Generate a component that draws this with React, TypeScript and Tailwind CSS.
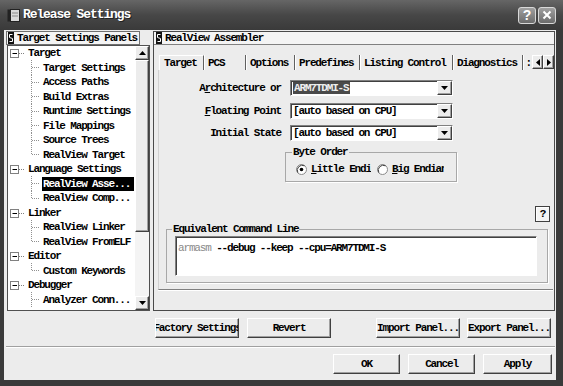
import React from 'react';

const raised =
  'border border-t-white border-l-white border-r-[#404040] border-b-[#404040] bg-[#ececec] shadow-[inset_-1px_-1px_0_#a0a0a0]';
const sunken =
  'border border-t-[#808080] border-l-[#808080] border-r-white border-b-white shadow-[inset_1px_1px_0_#404040]';

function Tri({ dir }: { dir: 'up' | 'down' | 'left' | 'right' }) {
  const pts = {
    down: '0,0 7,0 3.5,4',
    up: '0,4 7,4 3.5,0',
    left: '4,0 4,7 0,3.5',
    right: '0,0 0,7 4,3.5',
  }[dir];
  const vertical = dir === 'up' || dir === 'down';
  return (
    <svg width={vertical ? 7 : 4} height={vertical ? 4 : 7} viewBox={vertical ? '0 0 7 4' : '0 0 4 7'}>
      <polygon points={pts} fill="#000" />
    </svg>
  );
}

function PanelIcon() {
  return (
    <svg width="6" height="12" viewBox="0 0 6 12" className="shrink-0">
      <rect x="0" y="0" width="6" height="12" fill="#111" />
      <path d="M4.5 2.5 H1.5 V5.5 L4.5 6.5 V9.5 H1.5" stroke="#fff" strokeWidth="1" fill="none" />
    </svg>
  );
}

function Btn({ className, children }: { className: string; children: React.ReactNode }) {
  return (
    <div className={`flex h-[20px] items-center justify-center overflow-hidden whitespace-nowrap ${raised} ${className}`}>
      <span className="shrink-0">{children}</span>
    </div>
  );
}

function Combo({ children }: { children: React.ReactNode }) {
  return (
    <div className={`flex h-[16px] w-[163px] bg-white ${sunken}`}>
      <div className="flex flex-1 items-center overflow-hidden whitespace-nowrap pl-[2px]">{children}</div>
      <div className={`flex w-[15px] items-center justify-center ${raised}`}>
        <Tri dir="down" />
      </div>
    </div>
  );
}

function Radio({ on }: { on?: boolean }) {
  return (
    <svg width="11" height="11" viewBox="0 0 11 11" className="shrink-0">
      <circle cx="5.5" cy="5.5" r="5" fill="#fff" stroke="#8a8a8a" />
      <path d="M1.8 8.5 A5 5 0 0 1 8.5 1.8" stroke="#404040" fill="none" />
      {on && <circle cx="5.5" cy="5.5" r="1.8" fill="#000" />}
    </svg>
  );
}

type Node = { t: string; p?: boolean; last?: boolean; sel?: boolean };

const tree: Node[] = [
  { t: 'Target', p: true },
  { t: 'Target Settings' },
  { t: 'Access Paths' },
  { t: 'Build Extras' },
  { t: 'Runtime Settings' },
  { t: 'File Mappings' },
  { t: 'Source Trees' },
  { t: 'RealView Target', last: true },
  { t: 'Language Settings', p: true },
  { t: 'RealView Asse...', sel: true },
  { t: 'RealView Comp...', last: true },
  { t: 'Linker', p: true },
  { t: 'RealView Linker' },
  { t: 'RealView FromELF', last: true },
  { t: 'Editor', p: true },
  { t: 'Custom Keywords', last: true },
  { t: 'Debugger', p: true },
  { t: 'Analyzer Conn...' },
];

function TreeRow({ n }: { n: Node }) {
  if (n.p) {
    return (
      <div className="flex h-[14.5px] items-center">
        <svg width="20" height="14" viewBox="0 0 20 14" className="shrink-0">
          <rect x="2.5" y="3.5" width="8" height="8" fill="#fff" stroke="#808080" />
          <line x1="4.5" y1="7.5" x2="9" y2="7.5" stroke="#000" />
          <line x1="11" y1="7.5" x2="17" y2="7.5" stroke="#808080" strokeDasharray="1 1" />
        </svg>
        <span className="whitespace-nowrap">{n.t}</span>
      </div>
    );
  }
  return (
    <div className="flex h-[14.5px] items-center">
      <svg width="34" height="15" viewBox="0 0 34 15" className="shrink-0">
        <line x1="23.5" y1="0" x2="23.5" y2={n.last ? 7.5 : 15} stroke="#909090" strokeDasharray="1 1" />
        <line x1="24" y1="7.5" x2="31" y2="7.5" stroke="#909090" strokeDasharray="1 1" />
      </svg>
      <span className={`whitespace-nowrap pl-[1px] pr-[4px] leading-[14px] ${n.sel ? 'bg-black text-white' : ''}`}>
        {n.t}
      </span>
    </div>
  );
}

export default function App() {
  const tabs = [
    { t: 'Target', w: 'w-[45px]', sel: true },
    { t: 'PCS', w: 'w-[42px]' },
    { t: 'Options', w: 'w-[49px]' },
    { t: 'Predefines', w: 'w-[65px]' },
    { t: 'Listing Control', w: 'w-[93px]' },
    { t: 'Diagnostics', w: 'w-[70px]' },
  ];

  return (
    <div className="flex h-[386px] w-[563px] flex-col overflow-hidden bg-[#3a3a3a] font-['Liberation_Mono',monospace] text-[11px] font-bold leading-[12px] tracking-[-1.15px] text-black">
      {/* title bar */}
      <div className="flex h-[30px] shrink-0 items-center bg-gradient-to-b from-[#666] via-[#474747] to-[#3a3a3a]">
        <svg width="13" height="14" viewBox="0 0 13 14" className="ml-[7px] shrink-0">
          <rect x="3.5" y="1.5" width="9" height="12" fill="#d8d8d8" stroke="#222" />
          <rect x="0.5" y="1.5" width="3" height="12" fill="#222" />
          <line x1="5" y1="5" x2="11" y2="5" stroke="#888" />
          <line x1="5" y1="8" x2="11" y2="8" stroke="#888" />
        </svg>
        <span className="ml-[3px] text-[13px] leading-[14px] tracking-[-1.1px] text-white [text-shadow:1px_1px_0_#222]">
          Release Settings
        </span>
        <div className="ml-auto mr-[7px] flex gap-[2px]">
          <div className="flex h-[17px] w-[18px] items-center justify-center rounded-[3px] border border-[#d8d8d8] bg-gradient-to-b from-[#a0a0a0] to-[#6c6c6c] font-['Liberation_Sans',sans-serif] text-[14px] font-bold tracking-normal text-white">
            ?
          </div>
          <div className="flex h-[17px] w-[18px] items-center justify-center rounded-[3px] border border-[#d8d8d8] bg-gradient-to-b from-[#a0a0a0] to-[#6c6c6c]">
            <svg width="10" height="10" viewBox="0 0 10 10">
              <path d="M1.5 1.5 L8.5 8.5 M8.5 1.5 L1.5 8.5" stroke="#fff" strokeWidth="2" />
            </svg>
          </div>
        </div>
      </div>

      {/* body */}
      <div className="ml-[4px] flex h-[350px] w-[552px] shrink-0 flex-col bg-[#ececec]">
        <div className="mt-[1px] flex h-[280px]">
          {/* left column */}
          <div className="ml-[2px] flex w-[146px] flex-col">
            <div className="flex h-[14px] w-[134px] items-center gap-[3px] overflow-hidden border border-[#707070] bg-[#f4f4f4] pl-[1px]">
              <PanelIcon />
              <span className="whitespace-nowrap">Target Settings Panels</span>
            </div>
            <div className="ml-[1px] flex h-[266px] w-[143px] border border-[#505050] bg-white">
              <div className="flex-1 overflow-hidden">
                {tree.map((n, i) => (
                  <TreeRow key={i} n={n} />
                ))}
              </div>
              <div className="flex w-[14px] flex-col bg-[#f0f0f0]">
                <div className={`flex h-[14px] items-center justify-center ${raised}`}>
                  <Tri dir="up" />
                </div>
                <div className={`h-[172px] ${raised} bg-[#e4e4e4]`} />
                <div className="flex-1 bg-[#f4f4f4]" />
                <div className={`flex h-[14px] items-center justify-center ${raised}`}>
                  <Tri dir="down" />
                </div>
              </div>
            </div>
          </div>

          {/* right panel */}
          <div className="ml-[1px] flex w-[402px] flex-col border border-[#4a4a4a]">
            <div className="flex h-[13px] items-center gap-[3px] border-b border-[#808080] bg-[#f4f4f4] pl-[2px]">
              <PanelIcon />
              <span className="whitespace-nowrap">RealView Assembler</span>
            </div>

            {/* tabs */}
            <div className="mt-[10px] flex h-[15px] pl-[5px]">
              {tabs.map((t) => (
                <div
                  key={t.t}
                  className={`flex items-center whitespace-nowrap border-r border-r-[#606060] pl-[4px] shadow-[1px_0_0_#fff] ${t.w} ${
                    t.sel ? 'border-l border-t border-l-white border-t-white' : ''
                  }`}
                >
                  {t.t}
                </div>
              ))}
              <div className="flex w-[9px] items-center justify-end overflow-hidden pr-[1px]">:</div>
              <div className="flex h-[14px]">
                <div className={`flex w-[11px] items-center justify-center ${raised}`}>
                  <Tri dir="left" />
                </div>
                <div className={`flex w-[11px] items-center justify-center ${raised}`}>
                  <Tri dir="right" />
                </div>
              </div>
            </div>

            {/* tab page */}
            <div className="ml-[4px] flex h-[220px] w-[395px] flex-col border-b border-l border-b-[#808080] border-l-[#d0d0d0] shadow-[0_1px_0_#fff]">
              <div className="flex flex-col pt-[10px]">
                <div className="flex h-[16px] items-center">
                  <div className="w-[122px] text-right">
                    A<span className="underline">r</span>chitecture or
                  </div>
                  <div className="ml-[9px]">
                    <Combo>
                      <span className="bg-[#4a4a4a] px-[1px] text-[#eeeeee]">ARM7TDMI-S</span>
                    </Combo>
                  </div>
                </div>
                <div className="mt-[7px] flex h-[16px] items-center">
                  <div className="w-[122px] text-right">
                    <span className="underline">F</span>loating Point
                  </div>
                  <div className="ml-[9px]">
                    <Combo>[auto based on CPU]</Combo>
                  </div>
                </div>
                <div className="mt-[6px] flex h-[16px] items-center">
                  <div className="w-[122px] text-right">Initial State</div>
                  <div className="ml-[9px]">
                    <Combo>[auto based on CPU]</Combo>
                  </div>
                </div>
              </div>

              <fieldset className="ml-[126px] mt-[5px] w-[172px] border border-[#a8a8a8] pb-[6px] shadow-[1px_1px_0_#fff]">
                <legend className="ml-[6px] px-[1px] leading-[12px]">Byte Order</legend>
                <div className="mt-[5px] flex h-[12px] items-center pl-[10px]">
                  <Radio on />
                  <span className="ml-[4px] w-[60px] shrink-0 overflow-hidden whitespace-nowrap">
                    <span className="underline">L</span>ittle Endian
                  </span>
                  <span className="ml-[6px]">
                    <Radio />
                  </span>
                  <span className="ml-[4px] w-[52px] shrink-0 overflow-hidden whitespace-nowrap">
                    <span className="underline">B</span>ig Endian
                  </span>
                </div>
              </fieldset>

              <div className="mt-[24px] flex justify-end pr-[3px]">
                <div className="flex h-[16px] w-[15px] items-center justify-center border border-[#404040] bg-[#f4f4f4] shadow-[inset_1px_1px_0_#fff] text-[11px]">
                  ?
                </div>
              </div>

              <fieldset className="ml-[7px] mt-[1px] w-[382px] border border-[#a8a8a8] pb-[6px] shadow-[1px_1px_0_#fff]">
                <legend className="ml-[5px] px-[1px] leading-[12px]">Equivalent Command Line</legend>
                <div className={`ml-[8px] mt-[1px] h-[40px] w-[362px] bg-white px-[2px] pt-[5px] ${sunken}`}>
                  <span className="font-normal text-[#8a8a8a]">armasm</span> --debug --keep --cpu=ARM7TDMI-S
                </div>
              </fieldset>
            </div>
          </div>
        </div>

        {/* panel buttons */}
        <div className="mt-[7px] flex pl-[151px] pr-[5px]">
          <Btn className="w-[84px]">Factory Settings</Btn>
          <Btn className="ml-[8px] w-[84px]">Revert</Btn>
          <div className="flex-1" />
          <Btn className="w-[84px]">Import Panel...</Btn>
          <Btn className="ml-[7px] w-[84px]">Export Panel...</Btn>
        </div>

        {/* separator */}
        <div className="ml-[2px] mr-[1px] mt-[8px] h-[2px] border-t border-b border-t-[#a0a0a0] border-b-white" />

        {/* dialog buttons */}
        <div className="mt-[6px] flex justify-end pr-[4px]">
          <Btn className="w-[67px]">OK</Btn>
          <Btn className="ml-[8px] w-[67px]">Cancel</Btn>
          <Btn className="ml-[8px] w-[69px]">Apply</Btn>
        </div>
      </div>
    </div>
  );
}
